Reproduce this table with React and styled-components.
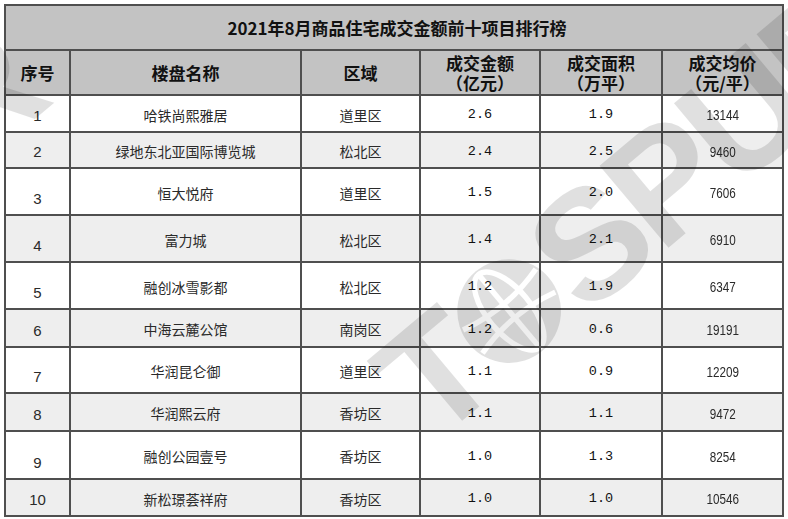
import React, { useId } from 'react'
import styled, { createGlobalStyle } from 'styled-components'

const GlobalStyle = createGlobalStyle`
  * { box-sizing: border-box; }
  body {
    margin: 0;
    background: #ffffff;
    font-family: "Liberation Sans", "Noto Sans CJK SC", sans-serif;
    color: #222;
  }
`

const cjk = `"Noto Sans CJK SC", "Liberation Sans", sans-serif`

const columns = [
  { title: '序号' },
  { title: '楼盘名称' },
  { title: '区域' },
  { title: '成交金额', unit: '（亿元）' },
  { title: '成交面积', unit: '（万平）' },
  { title: '成交均价', unit: '（元/平）' },
]

const rows = [
  { name: '哈铁尚熙雅居', area: '道里区', amount: '2.6', size: '1.9', price: '13144', h: 35 },
  { name: '绿地东北亚国际博览城', area: '松北区', amount: '2.4', size: '2.5', price: '9460', h: 34 },
  { name: '恒大悦府', area: '道里区', amount: '1.5', size: '2.0', price: '7606', h: 45 },
  { name: '富力城', area: '松北区', amount: '1.4', size: '2.1', price: '6910', h: 45 },
  { name: '融创冰雪影都', area: '松北区', amount: '1.2', size: '1.9', price: '6347', h: 45 },
  { name: '中海云麓公馆', area: '南岗区', amount: '1.2', size: '0.6', price: '19191', h: 36 },
  { name: '华润昆仑御', area: '道里区', amount: '1.1', size: '0.9', price: '12209', h: 44 },
  { name: '华润熙云府', area: '香坊区', amount: '1.1', size: '1.1', price: '9472', h: 36 },
  { name: '融创公园壹号', area: '香坊区', amount: '1.0', size: '1.3', price: '8254', h: 46 },
  { name: '新松璟荟祥府', area: '香坊区', amount: '1.0', size: '1.0', price: '10546', h: 35 },
]

const Page = styled.div`
  position: relative;
  width: 788px;
  height: 519px;
  overflow: hidden;
  padding: 4px 0 0 4px;
`

const Board = styled.div`
  display: grid;
  grid-template-columns: 63px 229px 117px 118px 120px 119px;
  grid-template-rows: 43px 43px ${({ $rows }) => $rows};
  gap: 2px;
  padding: 2px;
  width: fit-content;
  background: #4f4f4f;
`

const Title = styled.div`
  grid-column: 1 / -1;
  display: flex;
  align-items: center;
  justify-content: center;
  padding-left: 6px;
  background: #c3c3c3;
  font-family: ${cjk};
  font-weight: 700;
  font-size: 17px;
  color: #111;
`

const HeadCell = styled.div`
  display: flex;
  flex-direction: column;
  align-items: center;
  justify-content: center;
  background: #c3c3c3;
  font-family: ${cjk};
  font-weight: 700;
  font-size: 17px;
  line-height: 20px;
  color: #111;
`

const HeadLine = styled.span`
  display: block;
  height: 20px;
`

const Cell = styled.div`
  display: flex;
  align-items: center;
  justify-content: center;
  padding-top: 2px;
  background: ${({ $shade }) => ($shade ? '#eeeeee' : '#ffffff')};
  font-family: ${cjk};
  font-size: 14px;
  color: #2a2a2a;
`

const IndexCell = styled(Cell)`
  align-items: flex-end;
  padding: 0 0 7px;
  font-family: "Liberation Sans", sans-serif;
  font-size: 15px;
  line-height: 17px;
`

const DecimalCell = styled(Cell)`
  font-family: "Liberation Mono", monospace;
  font-size: 13.5px;
  color: #111;
`

const PriceText = styled.span`
  display: inline-block;
  font-family: "Liberation Sans", sans-serif;
  font-size: 15px;
  transform: scaleX(0.78);
`

const Mark = styled.div`
  position: absolute;
  left: ${({ $x }) => $x}px;
  top: ${({ $y }) => $y}px;
  transform: translate(-50%, -50%) rotate(-40deg);
  display: flex;
  align-items: center;
  font-family: "Liberation Sans", sans-serif;
  font-weight: 700;
  font-size: 156px;
  line-height: 1;
  letter-spacing: -6px;
  white-space: nowrap;
  color: rgba(0, 0, 0, 0.12);
  pointer-events: none;
`

const Globe = () => {
  const id = useId()
  return (
    <svg width="108" height="108" viewBox="0 0 100 100">
      <mask id={id}>
        <rect width="100" height="100" fill="white" />
        <g stroke="black" strokeWidth="5" fill="none">
          <ellipse cx="50" cy="50" rx="20" ry="44" />
          <line x1="50" y1="4" x2="50" y2="96" />
          <path d="M6 36 Q50 48 94 36" />
          <path d="M6 64 Q50 52 94 64" />
        </g>
      </mask>
      <circle cx="50" cy="50" r="48" fill="currentColor" mask={`url(#${id})`} />
    </svg>
  )
}

const Watermark = ({ x, y }) => (
  <Mark $x={x} $y={y} aria-hidden="true">
    T<Globe />SPUR
  </Mark>
)

const App = () => {
  const rowHeights = rows.map((r) => `${r.h}px`).join(' ')
  return (
    <Page>
      <GlobalStyle />
      <Board $rows={rowHeights}>
        <Title>2021年8月商品住宅成交金额前十项目排行榜</Title>
        {columns.map((c) => (
          <HeadCell key={c.title}>
            <HeadLine>{c.title}</HeadLine>
            {c.unit && <HeadLine>{c.unit}</HeadLine>}
          </HeadCell>
        ))}
        {rows.map((r, i) => {
          const shade = i % 2 === 1
          return (
            <React.Fragment key={r.name}>
              <IndexCell $shade={shade}>{i + 1}</IndexCell>
              <Cell $shade={shade}>{r.name}</Cell>
              <Cell $shade={shade}>{r.area}</Cell>
              <DecimalCell $shade={shade}>{r.amount}</DecimalCell>
              <DecimalCell $shade={shade}>{r.size}</DecimalCell>
              <Cell $shade={shade}>
                <PriceText>{r.price}</PriceText>
              </Cell>
            </React.Fragment>
          )
        })}
      </Board>
      <Watermark x={632} y={208} />
      <Watermark x={-215} y={258} />
    </Page>
  )
}

export default App
